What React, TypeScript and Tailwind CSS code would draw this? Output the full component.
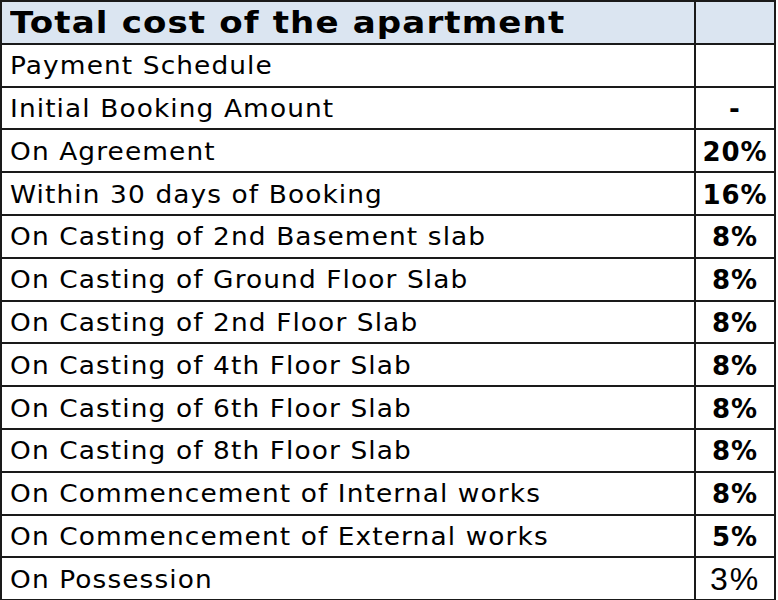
const rows: [string, string][] = [
  ['Payment Schedule', ''],
  ['Initial Booking Amount', '-'],
  ['On Agreement', '20%'],
  ['Within 30 days of Booking', '16%'],
  ['On Casting of 2nd Basement slab', '8%'],
  ['On Casting of Ground Floor Slab', '8%'],
  ['On Casting of 2nd Floor Slab', '8%'],
  ['On Casting of 4th Floor Slab', '8%'],
  ['On Casting of 6th Floor Slab', '8%'],
  ['On Casting of 8th Floor Slab', '8%'],
  ['On Commencement of Internal works', '8%'],
  ['On Commencement of External works', '5%'],
]

function Label({ children }: { children: React.ReactNode }) {
  return (
    <div className="flex-1 flex items-center pl-[8px] pt-[2px] border-r-2 border-b-2 border-[#1a1a1a] text-[24px] leading-none">
      <span className="inline-block origin-left scale-x-[1.1] tracking-[1px] whitespace-nowrap">{children}</span>
    </div>
  )
}

export default function App() {
  return (
    <div className="w-[778px] h-[600px] bg-white overflow-hidden font-['DejaVu_Sans',sans-serif] text-black">
      <div className="w-[776px] border-t-2 border-l-2 border-[#1a1a1a]">
        <div className="flex h-[42.8px] bg-[#dbe5f1]">
          <div className="flex-1 flex items-center pl-[8px] border-r-2 border-b-2 border-[#1a1a1a] text-[31px] font-bold leading-none">
            <span className="inline-block origin-left scale-x-[1.1] tracking-[1px] whitespace-nowrap">
              Total cost of the apartment
            </span>
          </div>
          <div className="w-[80px] border-r-2 border-b-2 border-[#1a1a1a]" />
        </div>
        {rows.map(([label, pct], i) => (
          <div key={i} className="flex h-[42.8px]">
            <Label>{label}</Label>
            <div className="w-[80px] flex items-center justify-center pt-[2px] border-r-2 border-b-2 border-[#1a1a1a] text-[26px] font-bold tracking-[1px] leading-none">
              {pct}
            </div>
          </div>
        ))}
        <div className="flex h-[42.8px]">
          <Label>On Possession</Label>
          <div className="w-[80px] flex items-center justify-center border-r-2 border-b-2 border-[#1a1a1a] text-[32px] tracking-[2px] font-['Liberation_Sans',sans-serif] leading-none">
            3%
          </div>
        </div>
      </div>
    </div>
  )
}
